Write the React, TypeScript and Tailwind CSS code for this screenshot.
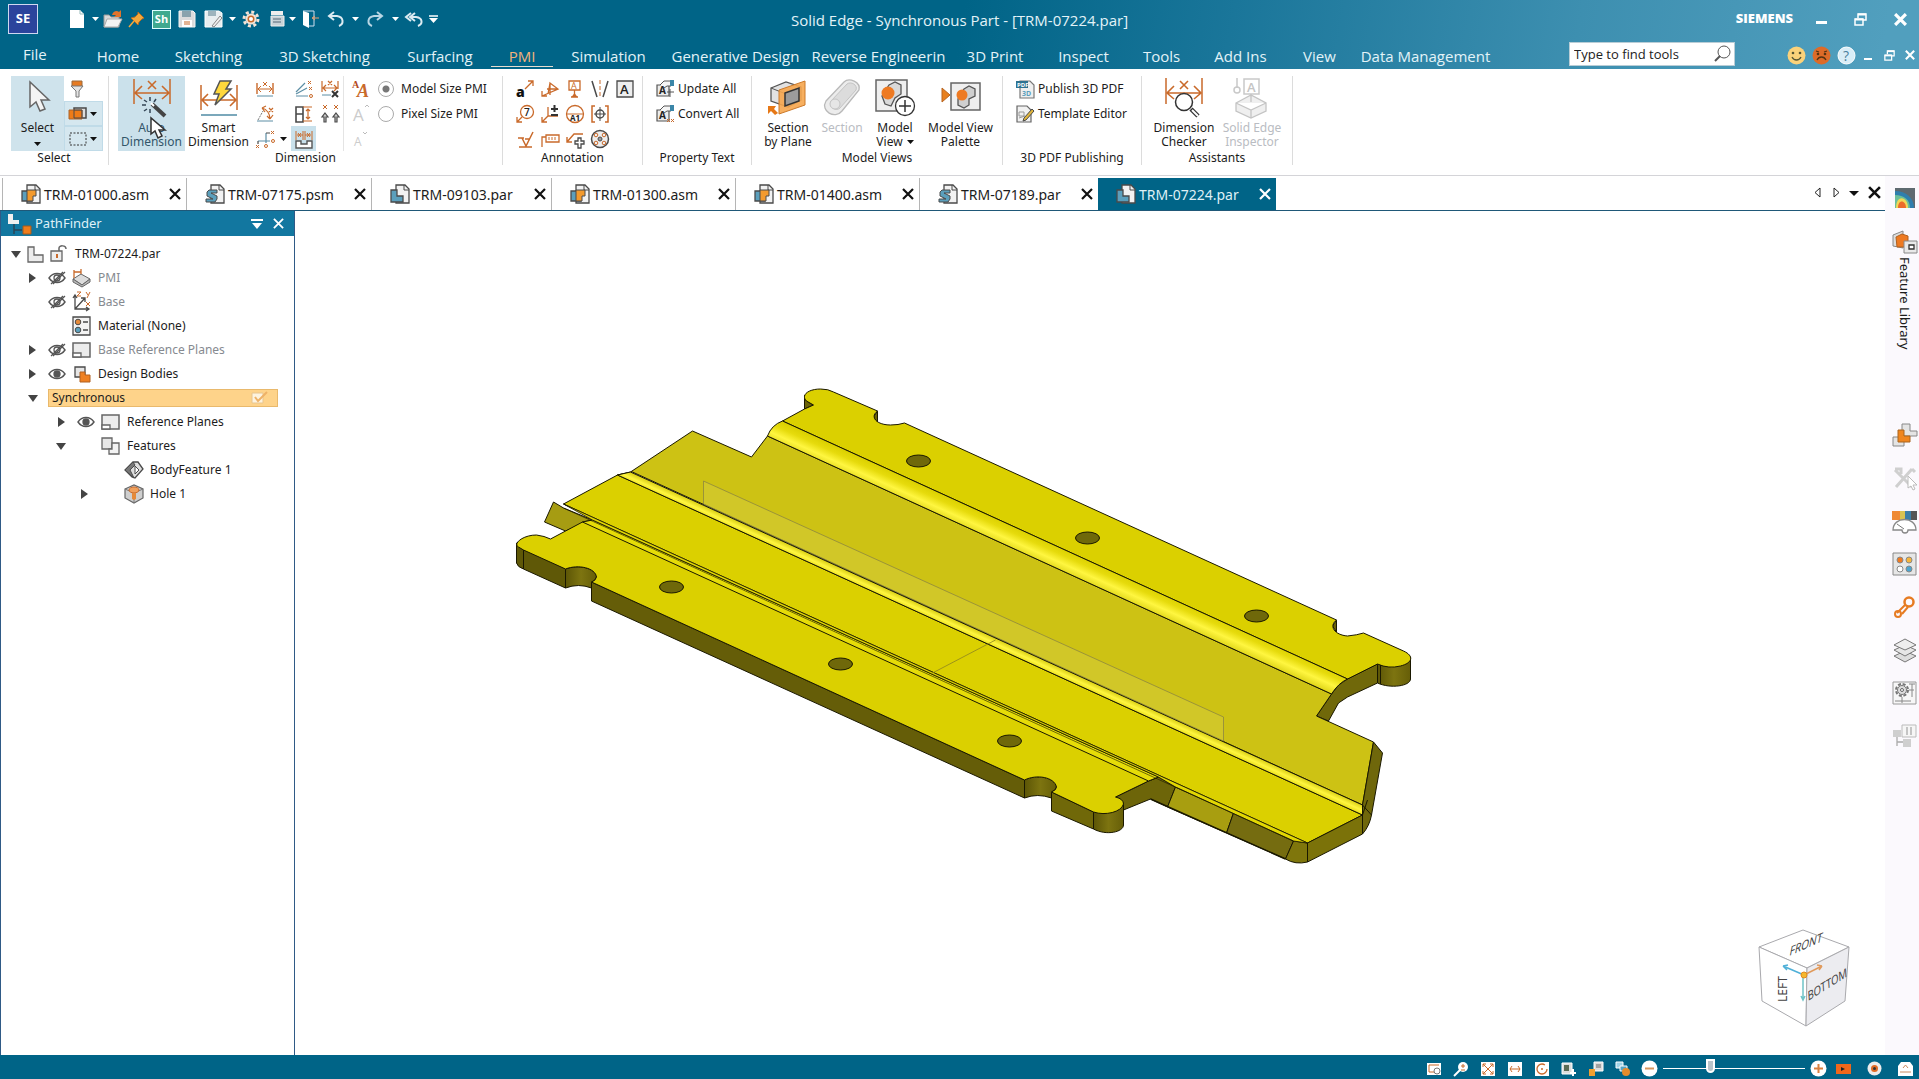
import { useState } from "react";
import type { ReactNode } from "react";

const O = "#c96a2b";
const D = "#4a4a4a";
const B = "#5b9fbc";

function Svg({ w, h, children, label }: { w: number; h: number; children: ReactNode; label?: string }) {
  return (
    <svg width={w} height={h} viewBox={`0 0 ${w} ${h}`} fill="none" className="shrink-0 overflow-visible" aria-label={label} aria-hidden={label ? undefined : true}>
      {children}
    </svg>
  );
}

function Caret({ color = "#111" }: { color?: string }) {
  return <Svg w={7} h={4}><path d="M0 0h7L3.5 4z" fill={color} /></Svg>;
}

function Cross({ size, color = "#111", width = 2 }: { size: number; color?: string; width?: number }) {
  return (
    <svg width={size} height={size} viewBox="0 0 12 12" fill="none" aria-hidden>
      <path d="M1 1l10 10M11 1L1 11" stroke={color} strokeWidth={width} />
    </svg>
  );
}

/* ---------- 18px ribbon glyphs ---------- */

const small: Record<string, ReactNode> = {
  filter: <><path d="M4 1h10v6H4z" fill="#e77b22" stroke="#9a6a3c" /><path d="M3 6h12l-4 5v6H8v-6z" fill="#e4e4e4" stroke="#777" /></>,
  overlap: <><path d="M5 3h12v10H5z" fill="#ddd" stroke={D} strokeWidth="1.5" /><path d="M0 5h13v9H0z" fill="#ef7b17" stroke="#a8642e" /><path d="M5 5h8v8H5z" stroke={D} /></>,
  box: <path d="M1 3h16v12H1z" stroke="#333" strokeDasharray="2 1.5" />,
  distance: <><path d="M1 3v11M17 3v11" stroke={O} strokeWidth="1.4" /><path d="M2 9h14M5 6L2 9l3 3M13 6l3 3-3 3M7 2l4 4M11 2L7 6" stroke={O} /><path d="M1 16h16" stroke="#5c8ea5" /></>,
  angle: <><path d="M1 16h16" stroke="#5c8ea5" /><path d="M2 15l5-9" stroke="#777" strokeDasharray="2 1" /><path d="M6 3c5 1 8 6 8 11M6 3l4-2M6 3l3 4M14 14l-3-3M14 14l3-4M13 3l4 4M17 3l-4 4" stroke={O} strokeWidth="1.2" /></>,
  coord: <><path d="M2 11h12M10 3v10" stroke="#5c8ea5" strokeWidth="1.2" /><path d="M10 3h4M2 11v3" stroke={D} strokeWidth="1.2" /><path d="M15 1l3 3M18 1l-3 3M0 15l3 3M3 15l-3 3" stroke={O} /><circle cx="17" cy="11" r="1.5" stroke={O} /><circle cx="10" cy="16" r="1.5" stroke={O} /></>,
  fan: <><path d="M1 16h12M1 14L12 8M1 12L10 3" stroke="#5c8ea5" strokeWidth="1.2" /><path d="M13 1l3 3M16 1l-3 3M14 7l3 3M17 7l-3 3" stroke={O} /><circle cx="16" cy="16" r="1.5" stroke={O} /></>,
  block: <><path d="M1 2h7v15H1zM1 9h7" stroke={D} strokeWidth="1.6" /><path d="M8 2h9M8 16h9M13 4v10M11 6l2-2 2 2M11 12l2 2 2-2" stroke={O} strokeWidth="1.2" /></>,
  retrieve: <><path d="M2 5h6M10 5h6M1 1v9M8 1v9M10 1v9M17 1v9M3 3l3 4M6 3L3 7M12 3l3 4M15 3l-3 4" stroke={O} /><path d="M1 11h5v3h6v-3h5v7H1z" fill="#fff" stroke="#555" strokeWidth="1.4" /></>,
  detach: <><path d="M1 1v11M17 1v8M2 8h14M5 5L2 8l3 3M13 5l3 3-3 3M7 1l4 4M11 1L7 5" stroke={O} strokeWidth="1.2" /><path d="M1 15h9" stroke="#5c8ea5" /><path d="M11 11l6 6M17 11l-6 6" stroke="#333" strokeWidth="2" /></>,
  arrows: <><path d="M2 0l4 4M6 0L2 4M13 0l4 4M17 0l-4 4" stroke={O} /><path d="M4 8l3 4H5v5H3v-5H1zM15 8l3 4h-2v5h-2v-5h-2z" fill="#ccc" stroke={D} strokeWidth="1.2" /></>,
  leaderText: <><text x="0" y="17" fontSize="14" fontWeight="800" fill="#111" fontFamily="Open Sans">a</text><path d="M9 9l8-8M12 1h5v5" stroke={O} strokeWidth="1.3" /></>,
  leader: <><path d="M1 16L17 9 9 3v12M9 3L7 14M1 11v5h5M6 9h11" stroke={O} strokeWidth="1.3" /></>,
  datum: <><path d="M3 1h11v9H3zM8.500 10v6M5 17h7" stroke={O} strokeWidth="1.3" /><text x="5" y="9" fontSize="9" fill={O} fontFamily="Open Sans">A</text><path d="M8.500 13l3 4h-6z" fill={O} /></>,
  center: <><path d="M1 1l5 16M17 1l-5 16" stroke={D} strokeWidth="1.5" /><path d="M9 0v17" stroke={O} strokeDasharray="4 2" /></>,
  boxA: <><path d="M1 1h16v16H1z" fill="#eee" stroke={D} strokeWidth="1.3" /><text x="4" y="14" fontSize="13" fontWeight="600" fill="#222" fontFamily="Open Sans">A</text></>,
  balloon: <><circle cx="11" cy="7" r="6.500" stroke={O} strokeWidth="1.3" /><path d="M6 12l-5 5M1 12v5h5" stroke={O} strokeWidth="1.3" /><text x="8" y="11" fontSize="10" fontWeight="600" fill="#222" fontFamily="Open Sans">7</text></>,
  limits: <><path d="M1 17l6-6h10M7 2v9M1 12v5h5" stroke={O} strokeWidth="1.3" /><path d="M10 4h7M13.500 0v7M10 10h7" stroke="#333" strokeWidth="2" /></>,
  target: <><circle cx="9" cy="9" r="8.500" stroke={O} strokeWidth="1.300" /><path d="M1 9h16" stroke={O} /><text x="4" y="16" fontSize="8" fontWeight="700" fill="#222" fontFamily="Open Sans">A1</text></>,
  fcf: <><path d="M4 1H1v16h3M14 1h3v16h-3" stroke={O} strokeWidth="1.5" /><circle cx="9" cy="9" r="4" stroke={D} strokeWidth="1.5" /><path d="M9 2v14M3 9h12" stroke={D} /></>,
  surface: <path d="M2 8h6M6 8l4 8L17 2M3 17h13M9 9l4 0" stroke={O} strokeWidth="1.500" />,
  weld: <><path d="M1 17V7h4M5 5h13v7H5z" stroke={O} strokeWidth="1.300" /><path d="M8 7v3M11 7v3M14 7v3" stroke={O} /></>,
  edge: <><path d="M1 12L8 4h9M1 7v5h5" stroke={O} strokeWidth="1.400" /><path d="M12 8h3v3h3v3h-3v4h-3v-4H9v-3h3z" fill="#fff" stroke={D} strokeWidth="1.300" /></>,
  bolt: <><circle cx="9" cy="9" r="8.500" fill="#eee" stroke={D} strokeWidth="1.500" /><circle cx="9" cy="9" r="2" fill="#999" stroke={D} /><circle cx="5" cy="5" r="1.800" stroke={O} /><circle cx="13" cy="5" r="1.800" stroke={O} /><circle cx="5" cy="13" r="1.800" stroke={O} /><circle cx="13" cy="13" r="1.800" stroke={O} /></>,
  update: <><path d="M1 5h12v11H1z" fill="#ececec" stroke="#555" strokeWidth="1.200" /><path d="M4 5l4-4h7v5h-4L8 8" fill="#f5f5f5" stroke="#555" /><path d="M14 0h4v6h-4z" fill="#3b86a8" /><path d="M11 12h7M14 9v8" stroke="#555" /><text x="3" y="14" fontSize="10" fontWeight="700" fill="#222" fontFamily="Open Sans">A</text></>,
  convert: <><path d="M1 5h12v11H1z" fill="#ececec" stroke="#555" strokeWidth="1.200" /><path d="M4 5l4-4h7v5h-4L8 8" fill="#f5f5f5" stroke="#555" /><path d="M14 0h4v6h-4z" fill="#3b86a8" /><path d="M11 14l3 3M14 14l-3 3M15 14l3 3M18 14l-3 3" stroke={O} /><text x="3" y="14" fontSize="10" fontWeight="700" fill="#222" fontFamily="Open Sans">A</text></>,
  pdf: <><path d="M4 1h10l4 4v13H4z" fill="#efefef" stroke="#777" strokeWidth="1.200" /><path d="M0 1h12v7H0z" fill="#2f7290" /><text x="1" y="7" fontSize="6" fontWeight="700" fill="#fff" fontFamily="Open Sans">PDF</text><text x="6" y="16" fontSize="7" fontWeight="700" fill={B} fontFamily="Open Sans">3D</text></>,
  template: <><path d="M1 1h10l4 4v12H1z" fill="#f1f1f1" stroke="#666" strokeWidth="1.200" /><path d="M3 13l6-2M3 7h5v4H3z" stroke="#999" /><path d="M16 4l2 2-8 9-3 1 1-3z" fill="#e0b53c" stroke={D} /></>,
};

function Small({ name }: { name: string }) {
  return <Svg w={18} h={18}>{small[name]}</Svg>;
}

/* ---------- large ribbon glyphs, 40x40 ---------- */

const large: Record<string, ReactNode> = {
  select: <path d="M12 4v25l6-5 4 9 5-2-4-9h8z" fill="#f4f4f4" stroke="#666" strokeWidth="1.500" />,
  auto: <><path d="M2 1v25M38 1v25" stroke={O} strokeWidth="1.500" /><path d="M3 15h34M10 8l-7 7 7 6M30 8l7 7-7 6M16 3l8 8M24 3l-8 8" stroke={O} strokeWidth="1.600" /><path d="M18 19v4M12 22l3 2M10 27h4M12 33l3-2M18 31v4M24 21l-2 3" stroke="#345" strokeWidth="1.500" /><path d="M20 26l13 12" stroke="#444" strokeWidth="4" /><path d="M19 25l3 3" stroke="#fff" strokeWidth="2" /></>,
  smart: <><path d="M2 7v25M38 7v25" stroke={O} strokeWidth="1.500" /><path d="M3 22h34M9 16l-6 6 6 6M31 16l6 6-6 6" stroke={O} strokeWidth="1.600" /><path d="M2 37h36" stroke="#4f8ba5" strokeWidth="1.500" /><path d="M21 3h11l-5 8h5L16 27l4-11h-5z" fill="#ffd83c" stroke="#555" strokeWidth="1.500" /></>,
  sectionPlane: <><path d="M3 10l15-6 15 5v13l-13 7L3 23z" fill="#e2e2e2" stroke="#555" strokeWidth="1.300" /><path d="M3 10l15 6 15-7M18 16v13" stroke="#555" /><path d="M11 12L37 3v24L11 36z" fill="#f6a64e" fillOpacity=".9" stroke="#cc7a2b" /><path d="M17 15l14-5v13l-14 5z" fill="#9c9c9c" stroke="#333" strokeWidth="1.500" /><path d="M0 28h8l-2 3 4 4-3 2-4-4-3 3z" fill="#e67817" /></>,
  section: <><path d="M4 23L22 4c5-5 17 0 15 8L20 33C13 42-2 33 4 23z" fill="#ececec" stroke="#b9b9b9" strokeWidth="1.300" /><path d="M9 23L25 6c4-3 11 1 9 6L18 30c-4 4-12-1-9-7z" fill="#dcdcdc" stroke="#c4c4c4" /><circle cx="13" cy="26" r="5" fill="#e6e6e6" stroke="#c4c4c4" /></>,
  modelView: <><path d="M1 2h31v31H1z" fill="#efefef" stroke="#666" strokeWidth="1.500" /><path d="M14 7l6-3 6 3v9l-6 4-4 8-6-2-3-8z" fill="#d9d9d9" stroke="#555" strokeWidth="1.300" /><circle cx="13" cy="15" r="6.500" fill="#ee7a22" /><circle cx="30" cy="28" r="9.500" fill="#fff" stroke="#333" strokeWidth="1.300" /><path d="M30 22v12M24 28h12" stroke="#333" strokeWidth="1.500" /></>,
  palette: <><path d="M10 5h29v27H10z" fill="#efefef" stroke="#666" strokeWidth="1.500" /><path d="M23 11l5-3 6 3v7l-6 3v6l-5 3-6-3v-6z" fill="#cfcfcf" stroke="#555" strokeWidth="1.300" /><circle cx="21" cy="17" r="5.500" fill="#ee7a22" /><path d="M1 10l8 7-8 7z" fill="#e8801e" stroke="#b86520" /></>,
  checker: <><path d="M2 0v26M38 0v26" stroke={O} strokeWidth="1.500" /><path d="M3 15h34M10 8l-7 7 7 6M30 8l7 7-7 6M16 3l8 8M24 3l-8 8" stroke={O} strokeWidth="1.600" /><circle cx="20" cy="24" r="8.500" fill="#fff" stroke="#333" strokeWidth="1.500" /><path d="M27 31l7 7" stroke="#333" strokeWidth="4.500" /><path d="M28 32l6 6" stroke="#fff" strokeWidth="2" /></>,
  inspector: <><path d="M5 0v10" stroke="#c9c9c9" strokeWidth="1.500" /><circle cx="5" cy="12" r="3" stroke="#c9c9c9" strokeWidth="1.500" /><path d="M12 1h15v15H12z" stroke="#c9c9c9" strokeWidth="1.500" /><text x="15" y="14" fontSize="13" fill="#c4c4c4" fontWeight="600" fontFamily="Open Sans">A</text><path d="M4 25l15-8 15 8v8l-15 7-15-7zM4 25l15 7 15-7M19 32v8M19 16v8" fill="#efefef" stroke="#c4c4c4" strokeWidth="1.300" /></>,
};

function Big({ icon, lines, className, disabled, caret, children }: { icon: string; lines: string[]; className: string; disabled?: boolean; caret?: boolean; children?: ReactNode }) {
  return (
    <button disabled={disabled} className={`relative flex flex-col items-center gap-[3px] whitespace-nowrap pt-[2px] text-[12px] leading-[14px] disabled:text-[#b9bcc2] ${className}`}>
      <Svg w={40} h={40}>{large[icon]}</Svg>
      <span className="flex flex-col items-center">
        {lines.map((l, i) => (
          <span key={l} className="flex items-center gap-1">
            {l}
            {caret && i === lines.length - 1 && <Caret />}
          </span>
        ))}
      </span>
      {children}
    </button>
  );
}

function Group({ label, className, inner = "", children }: { label: string; className: string; inner?: string; children: ReactNode }) {
  return (
    <section className={`flex shrink-0 flex-col border-r border-[#dcdcdc] ${className}`}>
      <div className={`flex h-[75px] shrink-0 ${inner}`}>{children}</div>
      <h2 className="text-center text-[12px] leading-[14px]">{label}</h2>
    </section>
  );
}

function Tool({ name, className = "" }: { name: string; className?: string }) {
  return (
    <button aria-label={name} className={`flex h-[25px] w-[25px] items-center justify-center ${className}`}>
      <Small name={name} />
    </button>
  );
}

function Ribbon() {
  const [size, setSize] = useState("model");
  const annotation = ["leaderText", "leader", "datum", "center", "boxA", "balloon", "limits", "target", "fcf", "", "surface", "weld", "edge", "bolt"];

  return (
    <div className="flex h-[107px] border-b border-[#d4d4d8] bg-white pt-[7px] pb-[10px] text-[#1c1c1c]">
      <Group label="Select" className="w-[109px]" inner="pl-[11px]">
        <button className="relative flex w-[53px] flex-col items-center gap-[3px] bg-[#cfe3ec] pt-[2px] text-[12px] leading-[14px]">
          <Svg w={40} h={40}>{large.select}</Svg>
          Select
          <span className="mt-1"><Caret /></span>
        </button>
        <div className="flex w-[39px] flex-col">
          <Tool name="filter" />
          <div className="flex h-[25px] items-center border border-[#c0dbe8] bg-[#d5e7ef]"><Tool name="overlap" /><Caret /></div>
          <div className="flex h-[25px] items-center border border-[#c0dbe8] bg-[#d5e7ef]"><Tool name="box" /><Caret /></div>
        </div>
      </Group>

      <Group label="Dimension" className="w-[394px]" inner="pl-[9px]">
        <Big icon="auto" lines={["Auto", "Dimension"]} className="w-[67px] bg-[#cbe1eb] text-[#33566a]">
          <span className="absolute top-[41px] left-[32px]">
            <Svg w={16} h={22}><path d="M1 1v16l4-3 3 7 4-2-3-6h6z" fill="#fff" stroke="#333" strokeWidth="1.500" /></Svg>
          </span>
        </Big>
        <Big icon="smart" lines={["Smart", "Dimension"]} className="w-[67px]" />
        <div className="flex w-[39px] flex-col">
          <Tool name="distance" />
          <Tool name="angle" />
          <div className="flex items-center gap-[3px]"><Tool name="coord" /><Caret /></div>
        </div>
        <div className="grid w-[53px] grid-cols-2 content-start border-r border-[#e4e4e4]">
          <Tool name="fan" />
          <Tool name="detach" />
          <Tool name="block" />
          <Tool name="arrows" />
          <Tool name="retrieve" className="bg-[#c9e1ec]" />
        </div>
        <div className="flex flex-col pl-[8px]">
          <button aria-label="Font" className="flex h-[25px] w-6 items-center"><Svg w={18} h={18}><text x="5" y="17" fontSize="18" fontStyle="italic" fontWeight="700" fill={O} fontFamily="Liberation Serif">A</text><text x="0" y="8" fontSize="10" fontWeight="700" fill="#b3491b" fontFamily="Liberation Serif">A</text></Svg></button>
          <button aria-label="Grow font" className="flex h-[25px] w-6 items-center"><Svg w={18} h={18}><text x="1" y="16" fontSize="17" fill="#ccc" fontFamily="Open Sans">A</text><path d="M13 2l2-2 2 2" stroke="#bbb" /></Svg></button>
          <button aria-label="Shrink font" className="flex h-[25px] w-6 items-center"><Svg w={18} h={18}><text x="2" y="16" fontSize="12" fill="#ccc" fontFamily="Open Sans">A</text><path d="M11 2l2 2 2-2" stroke="#bbb" /></Svg></button>
        </div>
        <div className="flex flex-col pl-[2px] text-[12px]">
          {[["model", "Model Size PMI"], ["pixel", "Pixel Size PMI"]].map(([id, text]) => (
            <label key={id} className="flex h-[25px] items-center gap-[7px] whitespace-nowrap">
              <input
                type="radio"
                name="pmi-size"
                checked={size === id}
                onChange={() => setSize(id)}
                className="h-4 w-4 appearance-none rounded-full border border-[#aaa] bg-white checked:bg-[radial-gradient(circle,#777_3px,#fff_4px)]"
              />
              {text}
            </label>
          ))}
        </div>
      </Group>

      <Group label="Annotation" className="w-[140px]" inner="pl-[9px]">
        <div className="grid grid-cols-5 content-start">
          {annotation.map((n, i) => (n ? <Tool key={n} name={n} /> : <span key={i} />))}
        </div>
      </Group>

      <Group label="Property Text" className="w-[109px]" inner="pl-[13px]">
        <div className="flex flex-col text-[12px]">
          <button className="flex h-[25px] items-center gap-1 whitespace-nowrap"><Small name="update" />Update All</button>
          <button className="flex h-[25px] items-center gap-1 whitespace-nowrap"><Small name="convert" />Convert All</button>
        </div>
      </Group>

      <Group label="Model Views" className="w-[251px]" inner="pl-[9px]">
        <Big icon="sectionPlane" lines={["Section", "by Plane"]} className="w-[54px]" />
        <Big icon="section" lines={["Section"]} className="w-[54px]" disabled />
        <Big icon="modelView" lines={["Model", "View"]} className="w-[52px]" caret />
        <Big icon="palette" lines={["Model View", "Palette"]} className="w-[79px]" />
      </Group>

      <Group label="3D PDF Publishing" className="w-[139px]" inner="pl-[13px]">
        <div className="flex flex-col text-[12px]">
          <button className="flex h-[25px] items-center gap-1 whitespace-nowrap"><Small name="pdf" />Publish 3D PDF</button>
          <button className="flex h-[25px] items-center gap-1 whitespace-nowrap"><Small name="template" />Template Editor</button>
        </div>
      </Group>

      <Group label="Assistants" className="w-[151px]" inner="pl-2">
        <Big icon="checker" lines={["Dimension", "Checker"]} className="w-[68px]" />
        <Big icon="inspector" lines={["Solid Edge", "Inspector"]} className="w-[68px]" disabled />
      </Group>
    </div>
  );
}

/* ---------- title bar and ribbon tabs ---------- */

const tabs: [string, string][] = [
  ["Home", "w-[78px]"],
  ["Sketching", "w-[103px]"],
  ["3D Sketching", "w-[129px]"],
  ["Surfacing", "w-[102px]"],
  ["PMI", "w-[62px]"],
  ["Simulation", "w-[111px]"],
  ["Generative Design", "w-[143px]"],
  ["Reverse Engineerin", "w-[143px]"],
  ["3D Print", "w-[90px]"],
  ["Inspect", "w-[87px]"],
  ["Tools", "w-[69px]"],
  ["Add Ins", "w-[89px]"],
  ["View", "w-[69px]"],
  ["Data Management", "w-[143px]"],
];

function Restore({ size }: { size: number }) {
  return (
    <svg width={size} height={size} viewBox="0 0 13 13" fill="none" aria-hidden>
      <path d="M4 5V1h8v6H9" stroke="#fff" strokeWidth="1.500" />
      <path d="M4 1.500h8" stroke="#fff" strokeWidth="2" />
      <path d="M1 6h8v6H1z" stroke="#fff" strokeWidth="1.500" />
      <path d="M1 6.500h8" stroke="#fff" strokeWidth="2" />
    </svg>
  );
}

function QuickAccess() {
  return (
    <div className="flex items-center">
      <button aria-label="New" className="flex w-[32px] items-center gap-[7px]"><Svg w={16} h={20}><path d="M1 1h10l4 4v14H1z" fill="#fff" /><path d="M11 1v4h4" stroke="#9bb" /></Svg><Caret color="#fff" /></button>
      <button aria-label="Open" className="w-[25px] pl-[2px]"><Svg w={20} h={20}><path d="M1 6h5l2 2h8v10H1z" fill="#d8d8d8" stroke="#999" /><path d="M4 10h15l-4 8H1z" fill="#f4f4f4" stroke="#aaa" /><path d="M9 6c1-4 5-5 7-3l2-2v7h-7l2-2" fill="#e0742c" /></Svg></button>
      <button aria-label="Pin" className="w-[26px] pl-[2px]"><Svg w={18} h={20}><path d="M10 3l6 6-2 1-3 3-1 3-7-7 4-1 3-3z" fill="#f3a83c" stroke="#b86b20" /><path d="M6 12l-5 6" stroke="#f3a83c" strokeWidth="1.500" /></Svg></button>
      <button aria-label="Share" className="flex h-[19px] w-[19px] items-center justify-center border border-[#dff] bg-[#3fa98f] text-[11px] font-bold text-white">Sh</button>
      <button aria-label="Save" className="w-[25px] pl-[7px]"><Svg w={18} h={20}><path d="M1 2h14l2 2v14H1z" fill="#dcdcdc" stroke="#f5f5f5" /><path d="M4 2h9v6H4z" fill="#8aa3ad" /><path d="M4 11h10v7H4z" fill="#fff" /><path d="M6 13h6M6 15h6" stroke={O} /></Svg></button>
      <button aria-label="Save as" className="ml-[8px] flex w-[35px] items-center gap-[6px]"><Svg w={19} h={20}><path d="M1 2h14l3 2v14H1z" fill="#e8eef0" stroke="#fff" /><path d="M4 2h8v5H4z" fill="#9db4bd" /><path d="M8 17l8-10 2 2-8 9z" fill="#eee" stroke="#888" /></Svg><Caret color="#fff" /></button>
      <button aria-label="Options" className="w-[31px] pl-[3px]"><Svg w={18} h={20}><circle cx="9" cy="10" r="7" stroke="#f3e3d6" strokeWidth="3" strokeDasharray="3 2.500" /><circle cx="9" cy="10" r="4.500" fill="#c96a2b" stroke="#f3e3d6" strokeWidth="2" /><circle cx="9" cy="10" r="2" fill="#fff" /></Svg></button>
      <button aria-label="Views" className="flex w-[30px] items-center gap-1"><Svg w={15} h={20}><path d="M1 2h12v4H1z" fill="#eee" /><path d="M1 7h13v10H1z" fill="#c9d3d8" stroke="#eee" /><path d="M3 10h8M3 13h8" stroke="#567" /></Svg><Caret color="#fff" /></button>
      <button aria-label="Close" className="w-[27px] pl-[2px]"><Svg w={18} h={20}><path d="M1 2h11v15H6" stroke="#cde" /><path d="M1 2l6 2v15l-6-3z" fill="#fff" /><path d="M17 9h-6M13 7l-3 2 3 2" stroke="#e8a070" /></Svg></button>
      <button aria-label="Undo" className="flex w-[40px] items-center gap-2"><Svg w={17} h={20}><path d="M7 3L2 7l5 4M2 7h8c7 1 7 8 2 10" stroke="#dcebf2" strokeWidth="2" /></Svg><Caret color="#fff" /></button>
      <button aria-label="Redo" className="flex w-[37px] items-center gap-2"><Svg w={17} h={20}><path d="M10 3l5 4-5 4M15 7H7C0 8 0 15 5 17" stroke="#b8d6e4" strokeWidth="2" /></Svg><Caret color="#fff" /></button>
      <button aria-label="Undo all" className="flex items-center gap-[5px]"><Svg w={20} h={20}><path d="M7 4L2 8l5 4M11 4L6 8l5 4M6 8h6c7 1 7 7 2 9" stroke="#dcebf2" strokeWidth="2" /></Svg><Svg w={9} h={8}><path d="M0 1h9" stroke="#fff" strokeWidth="1.500" /><path d="M0 3h9L4.500 8z" fill="#fff" /></Svg></button>
    </div>
  );
}

function Header() {
  return (
    <header className="flex h-[69px] flex-col bg-[linear-gradient(100deg,#006487_50%,#1a769a_64%,#3d8fb0_82%,#519fbe_98%)] font-['Open_Sans',sans-serif] text-[#e3f3f8]">
      <div className="flex h-[38px] items-center">
        <div className="flex flex-1 items-center">
          <div className="ml-2 flex h-[30px] w-[30px] items-center justify-center border border-[#cfd8f0] bg-[#2b449c] text-[13px] font-bold text-white">SE</div>
          <div className="ml-[31px]"><QuickAccess /></div>
        </div>
        <h1 className="mt-px text-[15px] leading-5">Solid Edge - Synchronous Part - [TRM-07224.par]</h1>
        <div className="flex flex-1 items-center justify-end">
          <span className="mr-[23px] text-[13px] font-extrabold text-white">SIEMENS</span>
          <button aria-label="Minimize" className="mt-[7px] mr-[27px] h-[3px] w-[11px] bg-white" />
          <button aria-label="Restore" className="mr-[27px]"><Restore size={13} /></button>
          <button aria-label="Close window" className="mr-3"><Cross size={13} color="#fff" width={3} /></button>
        </div>
      </div>
      <nav className="flex flex-1 items-stretch text-[15px] leading-[20px]">
        <a href="#file" className="w-[79px] pt-[6px] pl-[23px]">File</a>
        {tabs.map(([name, width]) => (
          <a key={name} href="#tab" className={`flex shrink-0 justify-center pt-2 whitespace-nowrap ${width}`}>
            <span className={name === "PMI" ? "h-[21px] border-b border-[#e7dccf] px-[18px] text-[#f1b37c]" : ""}>{name}</span>
          </a>
        ))}
        <div className="flex flex-1 items-start justify-end pt-[4px] pr-1">
          <label className="flex h-[24px] w-[166px] items-center border border-[#b9cdd6] bg-white pr-[3px]">
            <input aria-label="Find tools" placeholder="Type to find tools" className="w-full min-w-0 bg-transparent pl-1 text-[13px] text-black outline-none placeholder:text-[#222]" />
            <Svg w={17} h={18}><circle cx="10" cy="7" r="6" stroke="#555" /><path d="M6 11l-5 5" stroke="#555" strokeWidth="2" /></Svg>
          </label>
          <div className="ml-[52px] flex h-[26px] items-center">
            <button aria-label="Like" className="mr-[6px]"><Svg w={19} h={19}><circle cx="9.500" cy="9.500" r="9" fill="#fbd27a" /><circle cx="6" cy="7" r="1.300" fill="#553" /><circle cx="13" cy="7" r="1.300" fill="#553" /><path d="M5 11c2 4 7 4 9 0" stroke="#553" strokeWidth="1.300" /></Svg></button>
            <button aria-label="Dislike" className="mr-[6px]"><Svg w={19} h={19}><circle cx="9.500" cy="9.500" r="9" fill="#dd6b28" /><circle cx="6" cy="8" r="1.300" fill="#531" /><circle cx="13" cy="8" r="1.300" fill="#531" /><path d="M5 14c2-4 7-4 9 0M4 5l3 1M15 5l-3 1" stroke="#531" strokeWidth="1.300" /></Svg></button>
            <button aria-label="Help" className="mr-2"><Svg w={19} h={19}><circle cx="9.500" cy="9.500" r="8.500" fill="#d9edf7" stroke="#fff" /><text x="6" y="15" fontSize="14" fill="#4a7f9c" fontFamily="Open Sans">?</text></Svg></button>
            <button aria-label="Minimize document" className="mt-[7px] mr-[12px] h-[2px] w-[8px] bg-white" />
            <button aria-label="Restore document" className="mr-[10px]"><Restore size={11} /></button>
            <button aria-label="Close document"><Cross size={10} color="#fff" width={2.5} /></button>
          </div>
        </div>
      </nav>
    </header>
  );
}

/* ---------- document tabs ---------- */

type Kind = "asm" | "psm" | "par";

const docs: { name: string; kind: Kind; width: string; active?: boolean }[] = [
  { name: "TRM-01000.asm", kind: "asm", width: "w-[184px]" },
  { name: "TRM-07175.psm", kind: "psm", width: "w-[185px]" },
  { name: "TRM-09103.par", kind: "par", width: "w-[180px]" },
  { name: "TRM-01300.asm", kind: "asm", width: "w-[184px]" },
  { name: "TRM-01400.asm", kind: "asm", width: "w-[184px]" },
  { name: "TRM-07189.par", kind: "psm", width: "w-[179px]" },
  { name: "TRM-07224.par", kind: "par", width: "w-[178px]", active: true },
];

function DocIcon({ kind }: { kind: Kind }) {
  return (
    <Svg w={20} h={20}>
      <path d="M6 1h9l4 4v14H6z" fill="#f2f2f2" stroke={D} strokeWidth="1.300" />
      <path d="M14 1v5h5" stroke={D} />
      {kind === "asm" && <><path d="M1 7h10v10H1z" fill={B} stroke={D} strokeWidth="1.300" /><path d="M6 6h9v6h-3v5H6z" fill="#f39a2d" stroke={D} /></>}
      {kind === "psm" && <path d="M4 6h8v3H6l6 3v3l-2 3H1v-3h7l-6-3V8z" fill={B} stroke={D} />}
      {kind === "par" && <path d="M1 6h6v6h6v6H1z" fill={B} stroke={D} strokeWidth="1.300" />}
    </Svg>
  );
}

function DocTabs() {
  return (
    <div className="flex h-[35px] items-stretch border-b border-[#1f5878] pt-[2px] pl-[2px] text-[14px] text-[#1c1c1c]">
      {docs.map((d) => (
        <div
          key={d.name}
          className={`flex shrink-0 items-center pr-1 pl-[18px] ${d.width} ${d.active ? "bg-[#006487] text-[#dff0f6]" : "border-l border-[#b5b5b5]"}`}
        >
          <DocIcon kind={d.kind} />
          <span className="ml-[3px] flex-1 whitespace-nowrap">{d.name}</span>
          <button aria-label={`Close ${d.name}`} className="mr-[1px]"><Cross size={12} color={d.active ? "#fff" : "#111"} width={2.2} /></button>
        </div>
      ))}
      <div className="flex flex-1 items-start justify-end gap-[9px] pt-2 pr-1">
        <button aria-label="Previous" className="mr-[3px] pt-[1px]"><Svg w={7} h={11}><path d="M6 1v9L1 5.500z" stroke="#222" /></Svg></button>
        <button aria-label="Next" className="pt-[1px]"><Svg w={7} h={11}><path d="M1 1v9l5-4.500z" stroke="#222" /></Svg></button>
        <button aria-label="List" className="pt-[5px]"><Svg w={10} h={5}><path d="M0 0h10L5 5z" fill="#111" /></Svg></button>
        <button aria-label="Close active"><Cross size={13} width={2.4} /></button>
      </div>
    </div>
  );
}

/* ---------- PathFinder ---------- */

function Arrow({ open }: { open?: boolean }) {
  return <Svg w={16} h={16}>{open ? <path d="M3 5h10l-5 7z" fill="#444" /> : <path d="M5 3l7 5-7 5z" fill="#444" />}</Svg>;
}

function Eye({ off }: { off?: boolean }) {
  return (
    <Svg w={18} h={16}>
      <path d="M1 8c4-6 12-6 16 0-4 6-12 6-16 0z" stroke="#555" strokeWidth="1.400" />
      <circle cx="9" cy="8" r="3" fill={off ? "none" : "#555"} stroke="#555" strokeWidth="1.300" />
      {off && <path d="M3 14L15 2M5 14L17 2" stroke="#555" strokeWidth="1.200" />}
    </Svg>
  );
}

const tree: Record<string, ReactNode> = {
  pmi: <><path d="M1 11l8-5 9 5-8 6z" fill="#ddd" stroke="#666" /><path d="M1 11v3l9 5 8-5v-3l-8 6z" fill="#bbb" stroke="#666" /><path d="M2 10V2M9 6V1M2 4h7" stroke={O} strokeWidth="1.300" /></>,
  base: <><path d="M3 4v13h14M3 17L13 6M9 6h4v4M1 6l2-3 2 3M14 15l3 2-3 2" stroke={D} strokeWidth="1.300" /><path d="M5 0h4L5 4h4M14 0l2 3M18 0l-3 6M14 10l4 4M18 10l-4 4" stroke={O} /></>,
  material: <><path d="M1 1h17v18H1z" fill="#f3f3f3" stroke={D} strokeWidth="1.300" /><circle cx="6" cy="6" r="2.800" fill="#e58a3a" stroke={D} /><circle cx="6" cy="14" r="2.800" fill={B} stroke={D} /><path d="M11 6h5M11 14h5" stroke={D} strokeWidth="1.500" /></>,
  plane: <><path d="M1 3h17v14H1z" fill="#ececec" stroke="#666" strokeWidth="1.500" /><path d="M1 13h8v4H1z" fill="#fff" stroke="#666" strokeWidth="1.300" /></>,
  bodies: <><path d="M3 3h10v10H3z" fill="#e6e6e6" stroke={D} strokeWidth="1.300" /><path d="M8 8h5v3h5v7H8z" fill="#ee8022" stroke="#b06020" /></>,
  features: <><path d="M1 2h10v11H1z" fill="#e6e6e6" stroke="#666" strokeWidth="1.300" /><path d="M11 7h7v11H8v-5h3z" fill="#f3f3f3" stroke="#666" strokeWidth="1.300" /></>,
  body: <><path d="M9 2h5l5 7-8 9-3-1-7-7z" fill="#ddd" stroke={D} strokeWidth="1.300" /><path d="M1 10l8-8 2 3-5 5 4 8z" fill="#777" stroke={D} /><path d="M11 6v8l4-4z" fill="#fff" stroke={D} /></>,
  hole: <><path d="M1 5l9-4 9 4v9l-9 5-9-5z" fill="#cfcfcf" stroke="#666" strokeWidth="1.200" /><path d="M1 5l9 4 9-4M10 9v10" stroke="#777" /><ellipse cx="10" cy="6" rx="5" ry="3" fill="#f0a05c" stroke={O} /><path d="M8 9h4v6l-2 1-2-1z" fill="#e58a3a" /></>,
};

const rows: { indent: string; icon: string; label: string; arrow?: "open" | "closed"; eye?: "on" | "off"; dim?: boolean }[] = [
  { indent: "pl-[23px]", icon: "pmi", label: "PMI", arrow: "closed", eye: "off", dim: true },
  { indent: "pl-[23px]", icon: "base", label: "Base", eye: "off", dim: true },
  { indent: "pl-[23px]", icon: "material", label: "Material (None)" },
  { indent: "pl-[23px]", icon: "plane", label: "Base Reference Planes", arrow: "closed", eye: "off", dim: true },
  { indent: "pl-[23px]", icon: "bodies", label: "Design Bodies", arrow: "closed", eye: "on" },
  { indent: "", icon: "sync", label: "Synchronous" },
  { indent: "pl-[52px]", icon: "plane", label: "Reference Planes", arrow: "closed", eye: "on" },
  { indent: "pl-[52px]", icon: "features", label: "Features", arrow: "open" },
  { indent: "pl-[75px]", icon: "body", label: "BodyFeature 1" },
  { indent: "pl-[75px]", icon: "hole", label: "Hole 1", arrow: "closed" },
];

function PathFinder() {
  return (
    <aside className="flex w-[295px] shrink-0 flex-col border-r border-l border-[#2f5a86] bg-white">
      <div className="flex h-[25px] items-center bg-[#1277a0] pr-[10px] pl-[6px] text-[13px] text-[#dff1f8]">
        <Svg w={25} h={22}><path d="M1 1h5v6h6v4H1z" fill="#f0f0f0" /><path d="M7 11v10M7 17h8" stroke="#2d4654" strokeWidth="1.500" /><path d="M16 13h8v8h-8z" fill="#ef7d1c" stroke="#a55a1c" /></Svg>
        <span className="ml-[3px] flex-1">PathFinder</span>
        <button aria-label="Panel options" className="mr-[10px]"><Svg w={12} h={10}><path d="M0 1h12" stroke="#fff" strokeWidth="2" /><path d="M1 4h10l-5 6z" fill="#fff" /></Svg></button>
        <button aria-label="Close panel"><Cross size={11} color="#fff" /></button>
      </div>
      <ul className="pt-[6px] text-[12px] text-[#1c1c1c]">
        <li className="flex h-6 items-center pl-[7px]">
          <Arrow open />
          <span className="ml-[3px]"><Svg w={17} h={17}><path d="M1 1h6v8h9v7H1z" fill="#ececec" stroke="#666" strokeWidth="1.300" /></Svg></span>
          <span className="ml-[6px]"><Svg w={18} h={18}><path d="M1 6h11v10H1z" fill="#eee" stroke="#666" strokeWidth="1.300" /><path d="M9 6V3c0-3 7-3 7 1" stroke="#666" strokeWidth="1.500" /><path d="M6 9h2v4H6z" fill={O} /></Svg></span>
          <span className="ml-[7px]">TRM-07224.par</span>
        </li>
        {rows.map((r) =>
          r.icon === "sync" ? (
            <li key={r.label} className="flex h-6 items-center pl-[24px]">
              <Arrow open />
              <span className="mr-4 ml-[7px] flex h-[18px] flex-1 items-center justify-between border border-[#e9b96c] bg-[#fed38a] pr-2 pl-[3px] leading-[16px]">
                {r.label}
                <Svg w={18} h={14}><path d="M1 2h11v10H1z" fill="#fdf3df" stroke="#e8c58e" /><path d="M4 6l3 4 9-9" stroke="#eeb268" strokeWidth="2" /></Svg>
              </span>
            </li>
          ) : (
            <li key={r.label} className={`flex h-6 items-center ${r.indent} ${r.dim ? "text-[#868a90]" : ""}`}>
              <span className="w-6">{r.arrow && <Arrow open={r.arrow === "open"} />}</span>
              <span className="w-6">{r.eye && <Eye off={r.eye === "off"} />}</span>
              <span className="w-[26px]"><Svg w={20} h={20}>{tree[r.icon]}</Svg></span>
              {r.label}
            </li>
          ),
        )}
      </ul>
    </aside>
  );
}

/* ---------- sheet metal part ---------- */

const holes = [[918, 461], [1087, 538], [1256, 616], [671, 587], [840, 664], [1009, 741]];

function Part() {
  return (
    <svg viewBox="295 211 1589 844" className="h-full w-full" fill="none" stroke="#1a1800" strokeWidth="1" strokeLinejoin="round" role="img" aria-label="TRM-07224 part">
      <defs>
        <linearGradient id="bend" gradientUnits="userSpaceOnUse" x1="1000" y1="520" x2="991" y2="540">
          <stop offset="0" stopColor="#dbd000" />
          <stop offset=".3" stopColor="#e6db0c" />
          <stop offset=".65" stopColor="#fff640" />
          <stop offset="1" stopColor="#e2d81c" />
        </linearGradient>
        <linearGradient id="bend2" gradientUnits="userSpaceOnUse" x1="1000" y1="640" x2="995" y2="651">
          <stop offset="0" stopColor="#d6cb10" />
          <stop offset=".45" stopColor="#fff640" />
          <stop offset="1" stopColor="#dbd000" />
        </linearGradient>
        <linearGradient id="round" x1="0" x2="1">
          <stop offset="0" stopColor="#5c5506" />
          <stop offset=".5" stopColor="#7d7410" />
          <stop offset="1" stopColor="#665e08" />
        </linearGradient>
      </defs>

      {/* upper flange walls */}
      <path d="M804 395V409L813 405 806 401z" fill="#6b6308" />
      <path d="M877 411L873 417 877 423z" fill="#6b6308" />
      <path d="M1336 620L1332 626 1336 632z" fill="#6b6308" />
      <path d="M1377 664L1347 679 1338 685 1331 694 1316 716 1328 721 1338 703 1347 697 1377 683z" fill="#70680a" />
      <path d="M1377 664V683C1390 689 1410 686 1410 679V657z" fill="url(#round)" />
      <path d="M1380 665V684" />
      {/* inner wall */}
      <path d="M617 475L630 472 692 431 751 457 767 436 1331 694 1316 716 1373 742 1362 805 632 472z" fill="#cdc214" />
      {/* upper flange */}
      <path d="M782 421L804 409 813 405 806 401C800 395 808 389 820 389Q828 389 833 392L877 411C869 417 876 425 890 425Q898 425 904 423L1336 620C1328 626 1334 635 1347 636Q1357 635 1363 633L1403 651C1414 656 1412 663 1400 666Q1388 669 1377 664L1347 679z" fill="#dbd000" />
      <path d="M782 421Q771 425 767 436L1331 694Q1338 683 1347 679z" fill="url(#bend)" />
      {/* right chamfer */}
      <path d="M1373 742L1382 753 1371 815Q1369 826 1362 834V805z" fill="#6f670b" />
      <path d="M1362 805L1371 815M1362 815L1367 800" />
      {/* channel floor */}
      <path d="M563 504L617 475 1362 815 1307 843z" fill="#dbd000" />
      <path d="M617 475L630 472 1362 805V815z" fill="url(#bend2)" />
      <path d="M1362 815L1307 843V862L1362 834z" fill="#7b7209" />
      {/* left lip */}
      <path d="M553 502L544 522 565 531 592 520 563 508z" fill="#a69c12" />
      {/* front wall */}
      <path d="M1158 777L1148 781 1115 797 1123 810 1150 799 1167 807 1175 787z" fill="#6d6509" />
      <path d="M1175 787L1233 813 1226 833 1167 807z" fill="#a89e10" />
      <path d="M1233 813L1293 841 1285 859 1226 833z" fill="#756c10" />
      <path d="M1293 841L1307 843V862Q1295 865 1285 859z" fill="#7f760c" />
      <path d="M1150 799L1285 859" strokeWidth="1.500" />
      {/* front flange */}
      <path d="M516 543V563Q517 567 523 569L565 588V569z" fill="#5f5807" />
      <path d="M523 550V569" />
      <path d="M565 569C578 564 595 568 596 577Q595 581 591 582V588Q578 583 565 588z" fill="url(#round)" />
      <path d="M591 582V601L1024 798V780z" fill="#655d08" />
      <path d="M1024 780C1036 774 1054 777 1056 787Q1056 790 1051 792V798Q1037 793 1024 798z" fill="url(#round)" />
      <path d="M1051 792V811L1093 829V812z" fill="#706809" />
      <path d="M1093 812V829C1106 836 1123 832 1123 825V803z" fill="url(#round)" />
      <path d="M592 520L582 522 550 539Q544 536 536 535C522 535 512 544 518 547L523 550 565 569C578 564 595 568 596 577Q595 581 591 582L1024 780C1036 774 1054 777 1056 787Q1056 790 1051 792L1093 812C1105 816 1121 812 1123 804Q1123 799 1115 797L1148 781 1158 777z" fill="#dbd000" />
      <path d="M582 522L592 520 1158 777 1148 781z" fill="#e6dc08" />
      <path d="M563 504L592 520 1158 777 1175 787 1293 841 1307 843z" fill="#e2d703" strokeWidth=".8" />
      <path d="M563 508L1293 841" strokeWidth=".6" />

      {/* reference plane */}
      <path d="M703 481V504L1223 741V717z" fill="#d8cf40" fillOpacity=".45" stroke="#8d8640" strokeWidth=".8" />
      <path d="M995 640L932 673" stroke="#8d8420" strokeWidth=".8" />
      {holes.map(([x, y]) => (
        <ellipse key={x} cx={x} cy={y} rx="12" ry="6" fill="#6f680a" />
      ))}
    </svg>
  );
}

function ViewCube() {
  return (
    <svg width="94" height="100" viewBox="1757 928 94 100" fill="none" stroke="#a9a9ad" role="img" aria-label="View cube">
      <path d="M1803 930L1849 947 1807 968 1759 947z" fill="#fff" />
      <path d="M1759 947L1807 968 1806 1026 1762 1001z" fill="#fff" />
      <path d="M1849 947L1807 968 1806 1026 1845 1001z" fill="#ececf0" />
      <g fontFamily="Noto Sans" fontSize="11" fill="#444" stroke="none">
        <text transform="translate(1789 956) rotate(-24) skewX(-35)">FRONT</text>
        <text transform="translate(1787 1002) rotate(-90)" fontSize="12">LEFT</text>
        <text transform="translate(1808 1001) rotate(-32) skewX(-28)">BOTTOM</text>
      </g>
      <path d="M1804 975L1783 966M1783 966l5-1M1783 966l4 4" stroke="#4fb0d8" strokeWidth="1.500" />
      <path d="M1804 975L1822 966M1822 966l-5-1M1822 966l-3 4" stroke="#e09a5c" strokeWidth="1.500" />
      <path d="M1803 977V1000M1801 996l2 4 2-4" stroke="#6fc4c8" strokeWidth="1.500" />
      <circle cx="1804" cy="975" r="3" fill="#f5b82e" stroke="#e08a20" />
    </svg>
  );
}

/* ---------- right tool strip ---------- */

const strip: [string, ReactNode][] = [
  ["Assembly", <><path d="M10 1h8v7h7v5H10z" fill="#e4e4e4" stroke="#888" /><path d="M1 14h11v9H1z" fill="#e4e4e4" stroke="#888" /><path d="M6 7h6v6h6v6H6z" fill="#f0861f" stroke="#a9641e" /></>],
  ["Tools", <><path d="M3 4l17 17M20 3L4 21M3 3h6v5M20 3l3 3" stroke="#cfcfcf" strokeWidth="3" /><path d="M16 10v12l3-2 2 4 2-1-2-4h4z" fill="#fff" stroke="#bbb" /></>],
  ["Simulation", <><path d="M0 2h8v9H0z" fill="#ef8a35" /><path d="M8 2h5v9H8z" fill="#d8c352" /><path d="M13 2h6v9h-6z" fill="#3b7fa8" /><path d="M19 2h6v9h-6z" fill="#555" /><path d="M1 21c0-14 23-14 23 0h-8a3 3 0 01-6 0z" fill="#fff" stroke="#888" strokeWidth="1.300" /><path d="M5 15l7 5" stroke="#777" /></>],
  ["Materials", <><path d="M1 1h23v22H1z" fill="#e6e6e6" stroke="#888" /><circle cx="8" cy="8" r="3" fill="#ee7a22" stroke="#888" /><circle cx="17" cy="8" r="3" fill="#f5b53c" stroke="#888" /><circle cx="8" cy="17" r="3" fill="#fff" stroke="#888" /><circle cx="17" cy="17" r="3" fill="#4ca5cf" stroke="#888" /></>],
  ["Keys", <><circle cx="17" cy="7" r="4.500" stroke="#e67c22" strokeWidth="2.500" /><path d="M13 10l-8 8M16 12l-6 7" stroke="#e67c22" strokeWidth="2" /><circle cx="6" cy="19" r="3" stroke="#e67c22" strokeWidth="2" /></>],
  ["Layers", <><path d="M2 18l11-5 11 5-11 6z" fill="#ddd" stroke="#777" /><path d="M2 12l11-5 11 5-11 6z" fill="#e6e6e6" stroke="#777" /><path d="M2 7l11-6 11 6-11 5z" fill="#eee" stroke="#777" /></>],
  ["Engineering", <><path d="M1 1h23v22H1z" fill="#f7f7f7" stroke="#999" /><circle cx="10" cy="9" r="6" stroke="#777" strokeWidth="2" strokeDasharray="3 1.700" /><circle cx="10" cy="9" r="4.500" fill="#ddd" stroke="#777" /><circle cx="10" cy="9" r="1.500" fill="#fff" stroke="#666" /><path d="M20 3v13M17 3h6M17 9h5M3 20h16M10 16v6" stroke="#888" /></>],
  ["Structure", <><path d="M10 1h14v12H10z" fill="#f6f6f6" stroke="#bbb" /><path d="M1 6h8v7H1z" fill="#cfcfcf" /><path d="M11 15h8v8h-8z" fill="#cfcfcf" /><path d="M5 13v9M5 18h6M15 3v8M19 3v8" stroke="#aaa" strokeWidth="1.300" /></>],
];

function Strip() {
  return (
    <aside className="flex w-[34px] shrink-0 flex-col items-center bg-[#fbf9fd] pt-[11px] pl-[5px]">
      <button aria-label="Render"><Svg w={22} h={22}><path d="M1 1h20v20H1z" fill="#5e6a70" /><path d="M1 21V4c11 0 19 7 19 17z" fill="#2f7fae" /><path d="M1 21V8c9 0 15 5 15 13z" fill="#6bbf9a" /><path d="M2 21c0-14 12-12 12 0z" fill="#f2d857" /><path d="M4 21c0-9 8-8 8 0z" fill="#ec6b2b" /></Svg></button>
      <button className="mt-[21px] flex h-[127px] flex-col items-center text-[13px] text-[#1c1c1c]">
        <Svg w={26} h={24}><path d="M1 5l10-4v17l-10-2z" fill="#ddd" stroke="#888" /><path d="M4 7l6-3 6 2v11H5z" fill="#ee7a22" stroke="#b0611f" /><path d="M12 11h13v12H12z" fill="#e9e9e9" stroke="#888" /><path d="M17 15h5v4h-5z" fill="#fff" stroke="#333" strokeWidth="1.300" /></Svg>
        <span className="mt-[3px] whitespace-nowrap [writing-mode:vertical-rl]">Feature Library</span>
      </button>
      <div className="mt-[66px] flex flex-col gap-[19px]">
        {strip.map(([name, art]) => (
          <button key={name} aria-label={name}><Svg w={25} h={24}>{art}</Svg></button>
        ))}
      </div>
    </aside>
  );
}

/* ---------- status bar ---------- */

const status: [string, ReactNode][] = [
  ["Zoom area", <><path d="M1 2h14v12H1z" fill="#fff" /><path d="M3 4h10M3 4v7h5" stroke={O} /><circle cx="11" cy="10" r="3" fill="#fff" stroke="#777" /></>],
  ["Zoom", <><circle cx="10" cy="6" r="5" fill="#fff" /><path d="M7 9l-6 6" stroke="#fff" strokeWidth="2" /><path d="M8 5h4M10 3v4M8 9h4" stroke={O} /></>],
  ["Fit", <><path d="M1 1h14v14H1z" fill="#fff" /><path d="M3 3l10 10M13 3L3 13M3 6V3h3M10 3h3v3M3 10v3h3M13 10v3h-3" stroke={O} /></>],
  ["Pan", <><path d="M1 1h14v14H1z" fill="#fff" /><path d="M3 8h10M5 5L3 8l2 3M11 5l2 3-2 3" stroke={O} /></>],
  ["Rotate", <><path d="M1 1h14v14H1z" fill="#fff" /><circle cx="8" cy="8" r="5" stroke={O} strokeWidth="1.300" strokeDasharray="26 5" /><circle cx="8" cy="8" r="1" fill={O} /></>],
  ["Look at face", <><path d="M1 2h10v11H1z" fill="#ddd" stroke="#fff" /><path d="M3 4h5v6H3z" fill="#5a6b55" /><path d="M12 8v7M9 12h6" stroke="#fff" strokeWidth="2" /></>],
  ["View styles", <><path d="M6 1h9v9H6z" fill="#ddd" stroke="#fff" /><path d="M8 4h5M8 6h5" stroke="#666" /><path d="M1 8h6v7H1z" fill="#f0a030" /></>],
  ["View orientation", <><path d="M1 1h7v6H1z" fill="#9fd3e6" stroke="#fff" /><path d="M5 5h7v5H5z" fill="#56a4c4" stroke="#fff" /><circle cx="11" cy="11" r="4" fill="#e58c2c" /></>],
];

function StatusBar() {
  const [zoom, setZoom] = useState(32);
  return (
    <footer className="flex h-6 items-center justify-end bg-[#006487] pt-[3px] pr-[6px]">
      <div className="flex gap-[11px]">
        {status.map(([name, art]) => (
          <button key={name} aria-label={name}><Svg w={16} h={16}>{art}</Svg></button>
        ))}
      </div>
      <button aria-label="Zoom out" className="ml-[10px]"><Svg w={17} h={17}><circle cx="8.500" cy="8.500" r="8" fill="#fff" /><path d="M4 8.500h9" stroke="#d9975e" strokeWidth="2" /></Svg></button>
      <input
        type="range"
        aria-label="Zoom level"
        value={zoom}
        onChange={(e) => setZoom(Number(e.target.value))}
        className="mx-[5px] h-4 w-[142px] appearance-none bg-transparent [&::-webkit-slider-runnable-track]:h-px [&::-webkit-slider-runnable-track]:bg-white [&::-webkit-slider-thumb]:-mt-[9px] [&::-webkit-slider-thumb]:h-[14px] [&::-webkit-slider-thumb]:w-[9px] [&::-webkit-slider-thumb]:appearance-none [&::-webkit-slider-thumb]:rounded-b-[5px] [&::-webkit-slider-thumb]:border-2 [&::-webkit-slider-thumb]:border-white [&::-webkit-slider-thumb]:bg-[#b9c4ca]"
      />
      <button aria-label="Zoom in" className="mr-[9px]"><Svg w={17} h={17}><circle cx="8.500" cy="8.500" r="8" fill="#fff" /><path d="M4 8.500h9M8.500 4v9" stroke="#d9803f" strokeWidth="2" /></Svg></button>
      <button aria-label="Record" className="mr-[16px]"><Svg w={15} h={15}><path d="M0 3h15v10H0z" fill="#f0671b" /><path d="M5 6l4 2-4 2z" fill="#222" /></Svg></button>
      <button aria-label="Capture" className="mr-[16px]"><Svg w={15} h={15}><circle cx="7.500" cy="7.500" r="7" fill="#ececec" /><circle cx="7.500" cy="7.500" r="3.500" fill="#e06a24" /><circle cx="7.500" cy="7.500" r="1.500" fill="#333" /></Svg></button>
      <button aria-label="Upload"><Svg w={15} h={15}><path d="M3 1h9l3 4v10H0V5z" fill="#fff" /><path d="M5 7l2.500-3L10 7M2 11h11" stroke="#c98a60" /></Svg></button>
    </footer>
  );
}

export default function App() {
  return (
    <div className="flex h-screen flex-col overflow-hidden bg-white font-['Noto_Sans',sans-serif]">
      <Header />
      <Ribbon />
      <div className="flex min-h-0 flex-1">
        <div className="flex min-w-0 flex-1 flex-col">
          <DocTabs />
          <main className="flex min-h-0 flex-1">
            <PathFinder />
            <div className="relative min-w-0 flex-1">
              <Part />
              <div className="absolute right-[34px] bottom-[27px]"><ViewCube /></div>
            </div>
          </main>
        </div>
        <Strip />
      </div>
      <StatusBar />
    </div>
  );
}
